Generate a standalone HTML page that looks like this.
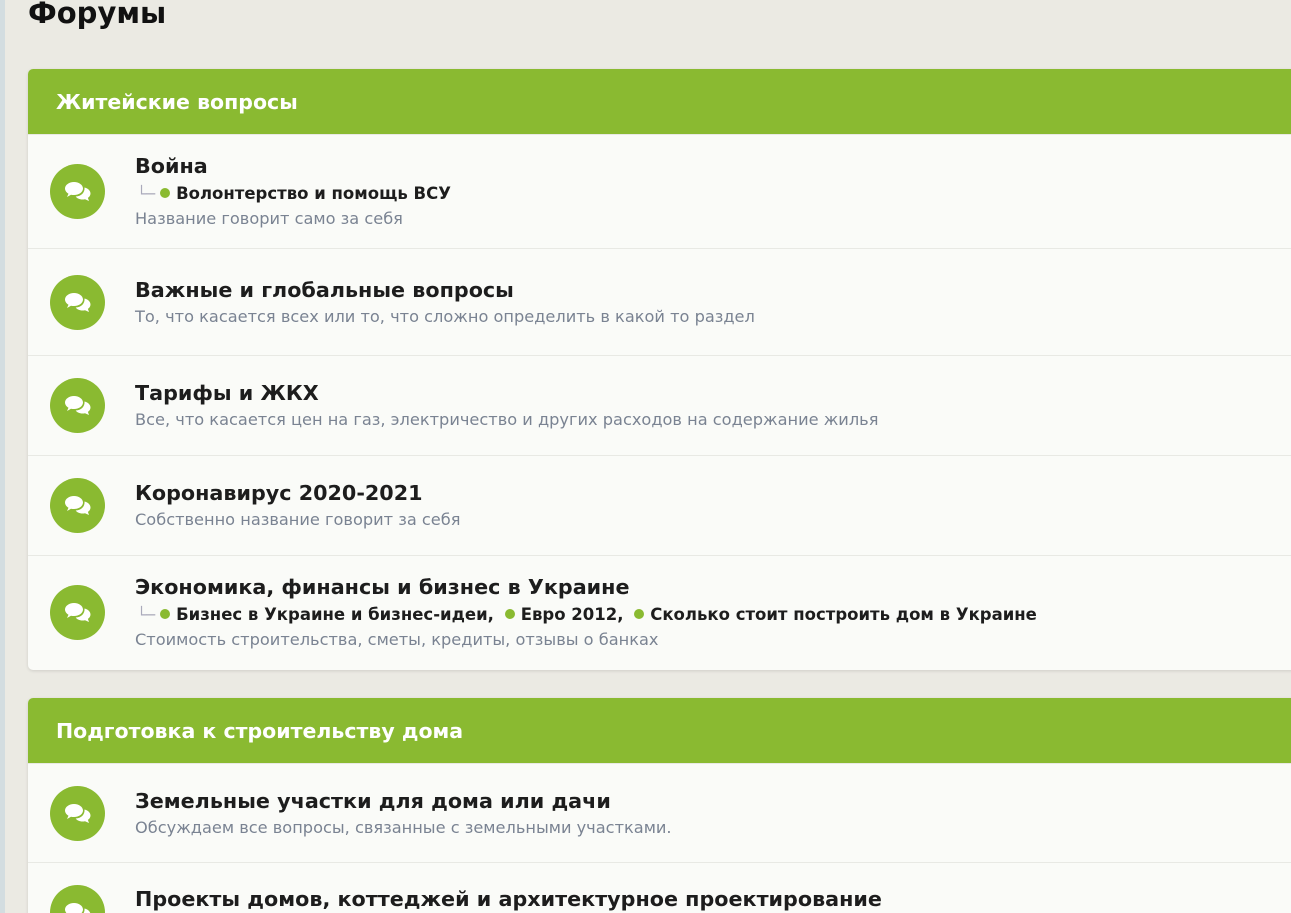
<!DOCTYPE html>
<html><head><meta charset="utf-8"><style>
*{margin:0;padding:0;box-sizing:border-box}
html,body{width:1291px;height:913px;overflow:hidden}
body{background:#ebeae3;font-family:"DejaVu Sans","Liberation Sans",sans-serif;position:relative}
.stripe{position:absolute;left:0;top:0;width:5px;height:913px;background:#d3dde0}
h1{position:absolute;left:28px;top:-4px;font-size:29px;font-weight:bold;color:#111}
.card{position:absolute;left:28px;width:1300px;background:#fafbf8;border-radius:5px;box-shadow:0 1px 3px rgba(0,0,0,.12);overflow:hidden}
.hd{height:65px;background:#8aba31;color:#fff;font-weight:bold;font-size:20.5px;padding-left:28px;line-height:66px}
.row{position:relative;border-top:1px solid #e8e9e4}
.row:first-of-type{border-top:none}
.ic{position:absolute;left:22px;width:55px;height:55px;border-radius:50%;background:#8aba31}
.ic svg{position:absolute;left:14px;top:15px}
.t{position:absolute;left:107px;font-size:20.7px;font-weight:bold;color:#1d1d1d;white-space:nowrap}
.s{position:absolute;left:107px;font-size:16.5px;font-weight:bold;color:#1d1d1d;white-space:nowrap}
.s .br{color:#aab;font-weight:normal;font-size:15px;margin-left:2px}
.s i{display:inline-block;width:10px;height:10px;border-radius:50%;background:#8aba31;margin:0 6px 3px 5px;vertical-align:middle}
.d{position:absolute;left:107px;font-size:16.2px;color:#7a8392;white-space:nowrap}
</style></head><body>
<div class="stripe"></div>
<h1>Форумы</h1>
<div class="card" style="top:69px;height:601px">
<div class="hd">Житейские вопросы</div>
<div class="row" style="height:114px"><div class="ic" style="top:29px"><svg width="28" height="26" viewBox="0 0 28 26"><path d="M10 3c5 0 9 3 9 6.5S15 16 10 16c-1 0-2 0-3-.3L3 18l1.5-3.2C2.5 13.5 1 11.6 1 9.5 1 6 5 3 10 3z" fill="#fff"/><path d="M20.5 8.5c3.5.8 6 3.2 6 6 0 1.8-1 3.4-2.6 4.4L25 22l-4-1.8c-.8.2-1.7.3-2.5.3-3 0-5.6-1.2-6.8-3 5.5-.3 9.3-3.8 8.8-9z" fill="#fff"/></svg></div>
<div class="t" style="top:19px">Война</div>
<div class="s" style="top:49px"><span class="br">└─</span><i></i>Волонтерство и помощь ВСУ</div>
<div class="d" style="top:74px">Название говорит само за себя</div></div>
<div class="row" style="height:107px"><div class="ic" style="top:26px"><svg width="28" height="26" viewBox="0 0 28 26"><path d="M10 3c5 0 9 3 9 6.5S15 16 10 16c-1 0-2 0-3-.3L3 18l1.5-3.2C2.5 13.5 1 11.6 1 9.5 1 6 5 3 10 3z" fill="#fff"/><path d="M20.5 8.5c3.5.8 6 3.2 6 6 0 1.8-1 3.4-2.6 4.4L25 22l-4-1.8c-.8.2-1.7.3-2.5.3-3 0-5.6-1.2-6.8-3 5.5-.3 9.3-3.8 8.8-9z" fill="#fff"/></svg></div>
<div class="t" style="top:29px">Важные и глобальные вопросы</div>
<div class="d" style="top:58px">То, что касается всех или то, что сложно определить в какой то раздел</div></div>
<div class="row" style="height:100px"><div class="ic" style="top:22px"><svg width="28" height="26" viewBox="0 0 28 26"><path d="M10 3c5 0 9 3 9 6.5S15 16 10 16c-1 0-2 0-3-.3L3 18l1.5-3.2C2.5 13.5 1 11.6 1 9.5 1 6 5 3 10 3z" fill="#fff"/><path d="M20.5 8.5c3.5.8 6 3.2 6 6 0 1.8-1 3.4-2.6 4.4L25 22l-4-1.8c-.8.2-1.7.3-2.5.3-3 0-5.6-1.2-6.8-3 5.5-.3 9.3-3.8 8.8-9z" fill="#fff"/></svg></div>
<div class="t" style="top:25px">Тарифы и ЖКХ</div>
<div class="d" style="top:54px">Все, что касается цен на газ, электричество и других расходов на содержание жилья</div></div>
<div class="row" style="height:100px"><div class="ic" style="top:22px"><svg width="28" height="26" viewBox="0 0 28 26"><path d="M10 3c5 0 9 3 9 6.5S15 16 10 16c-1 0-2 0-3-.3L3 18l1.5-3.2C2.5 13.5 1 11.6 1 9.5 1 6 5 3 10 3z" fill="#fff"/><path d="M20.5 8.5c3.5.8 6 3.2 6 6 0 1.8-1 3.4-2.6 4.4L25 22l-4-1.8c-.8.2-1.7.3-2.5.3-3 0-5.6-1.2-6.8-3 5.5-.3 9.3-3.8 8.8-9z" fill="#fff"/></svg></div>
<div class="t" style="top:25px">Коронавирус 2020-2021</div>
<div class="d" style="top:54px">Собственно название говорит за себя</div></div>
<div class="row" style="height:115px"><div class="ic" style="top:29px"><svg width="28" height="26" viewBox="0 0 28 26"><path d="M10 3c5 0 9 3 9 6.5S15 16 10 16c-1 0-2 0-3-.3L3 18l1.5-3.2C2.5 13.5 1 11.6 1 9.5 1 6 5 3 10 3z" fill="#fff"/><path d="M20.5 8.5c3.5.8 6 3.2 6 6 0 1.8-1 3.4-2.6 4.4L25 22l-4-1.8c-.8.2-1.7.3-2.5.3-3 0-5.6-1.2-6.8-3 5.5-.3 9.3-3.8 8.8-9z" fill="#fff"/></svg></div>
<div class="t" style="top:19px">Экономика, финансы и бизнес в Украине</div>
<div class="s" style="top:49px"><span class="br">└─</span><i></i>Бизнес в Украине и бизнес-идеи, <i></i>Евро 2012, <i></i>Сколько стоит построить дом в Украине</div>
<div class="d" style="top:74px">Стоимость строительства, сметы, кредиты, отзывы о банках</div></div>
</div>
<div class="card" style="top:698px;height:260px">
<div class="hd">Подготовка к строительству дома</div>
<div class="row" style="height:99px"><div class="ic" style="top:22px"><svg width="28" height="26" viewBox="0 0 28 26"><path d="M10 3c5 0 9 3 9 6.5S15 16 10 16c-1 0-2 0-3-.3L3 18l1.5-3.2C2.5 13.5 1 11.6 1 9.5 1 6 5 3 10 3z" fill="#fff"/><path d="M20.5 8.5c3.5.8 6 3.2 6 6 0 1.8-1 3.4-2.6 4.4L25 22l-4-1.8c-.8.2-1.7.3-2.5.3-3 0-5.6-1.2-6.8-3 5.5-.3 9.3-3.8 8.8-9z" fill="#fff"/></svg></div>
<div class="t" style="top:25px">Земельные участки для дома или дачи</div>
<div class="d" style="top:54px">Обсуждаем все вопросы, связанные с земельными участками.</div></div>
<div class="row" style="height:100px"><div class="ic" style="top:22px"><svg width="28" height="26" viewBox="0 0 28 26"><path d="M10 3c5 0 9 3 9 6.5S15 16 10 16c-1 0-2 0-3-.3L3 18l1.5-3.2C2.5 13.5 1 11.6 1 9.5 1 6 5 3 10 3z" fill="#fff"/><path d="M20.5 8.5c3.5.8 6 3.2 6 6 0 1.8-1 3.4-2.6 4.4L25 22l-4-1.8c-.8.2-1.7.3-2.5.3-3 0-5.6-1.2-6.8-3 5.5-.3 9.3-3.8 8.8-9z" fill="#fff"/></svg></div>
<div class="t" style="top:24px">Проекты домов, коттеджей и архитектурное проектирование</div></div>
</div>
</body></html>
